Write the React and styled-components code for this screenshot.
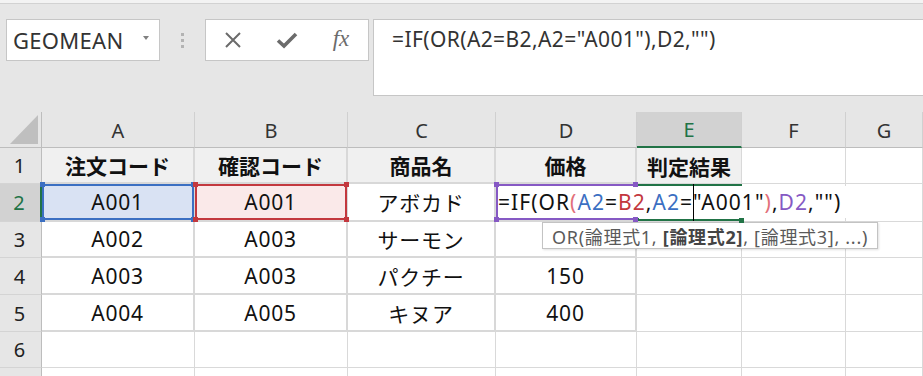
import React from 'react';
import styled, { createGlobalStyle } from 'styled-components';

const GlobalStyle = createGlobalStyle`
  html, body { margin: 0; padding: 0; background: #e6e6e6; overflow: hidden; }
  body { font-family: "Noto Sans", "Noto Sans CJK JP", sans-serif; }
`;

const GREEN = '#217346';
const BLUE = '#3b6fc2';
const RED = '#c3383e';
const PURPLE = '#8659c4';
const PAREN = '#e2707a';

const Page = styled.div`
  width: 923px;
  height: 376px;
  overflow: hidden;
  display: flex;
  flex-direction: column;
  background: #e6e6e6;
`;

const TopStrip = styled.div`
  height: 3px;
  flex: none;
  background: #f3f3f3;
  border-bottom: 1px solid #d2d2d2;
`;

const FormulaBar = styled.div`
  height: 108px;
  flex: none;
  box-sizing: border-box;
  display: flex;
  align-items: flex-start;
  padding: 15px 0 0 6px;
`;

const NameBox = styled.div`
  width: 154px;
  height: 42px;
  box-sizing: border-box;
  background: #fff;
  border: 1px solid #c6c6c6;
  display: flex;
  align-items: center;
  justify-content: space-between;
  padding: 0 10px 0 6px;
  font-size: 22px;
  letter-spacing: 0.3px;
  color: #333;
`;

const DropArrow = styled.span`
  width: 0;
  height: 0;
  border-left: 3.5px solid transparent;
  border-right: 3.5px solid transparent;
  border-top: 4px solid #808080;
  margin-top: -4px;
`;

const Grip = styled.div`
  width: 45px;
  height: 42px;
  display: flex;
  flex-direction: column;
  align-items: center;
  justify-content: center;
  gap: 3px;
  span {
    width: 3px;
    height: 3px;
    background: #b3b3b3;
  }
`;

const FxBox = styled.div`
  width: 164px;
  height: 42px;
  box-sizing: border-box;
  background: #fff;
  border: 1px solid #c6c6c6;
  display: grid;
  grid-template-columns: repeat(3, 54px);
  align-items: center;
  justify-items: center;
  color: #6b6b6b;
`;

const FxText = styled.span`
  font-family: "Liberation Serif", "DejaVu Serif", serif;
  font-style: italic;
  font-size: 23px;
  color: #6b6b6b;
  margin-top: -3px;
`;

const FormulaBox = styled.div`
  flex: 1;
  height: 77px;
  box-sizing: border-box;
  margin: 0 -2px 0 4px;
  background: #fff;
  border: 1px solid #c6c6c6;
  padding: 5px 0 0 18px;
  font-size: 21px;
  letter-spacing: 0.4px;
  line-height: 28px;
  color: #333;
  white-space: nowrap;
`;

const Sheet = styled.div`
  display: grid;
  grid-template-columns: 42px 153px 153px 148px 141px 105px 104px 77px;
  grid-template-rows: 36px 36px 38px 36px 37px 37px 36px 36px;
  background: #fff;
`;

const Corner = styled.div`
  background: #e6e6e6;
  border-right: 1px solid #bdbdbd;
  border-bottom: 1px solid #bdbdbd;
  display: flex;
  align-items: flex-end;
  justify-content: flex-end;
  padding: 0 3px 3px 0;
  box-sizing: border-box;
`;

const Triangle = styled.span`
  width: 0;
  height: 0;
  border-left: 28px solid transparent;
  border-bottom: 29px solid #bfbfbf;
`;

const ColHead = styled.div`
  box-sizing: border-box;
  background: ${p => (p.$active ? '#d2d2d2' : '#e6e6e6')};
  color: ${p => (p.$active ? GREEN : '#333')};
  border-right: 1px solid #d0d0d0;
  border-bottom: ${p => (p.$active ? `2px solid ${GREEN}` : '1px solid #bdbdbd')};
  display: flex;
  align-items: center;
  justify-content: center;
  font-size: 20px;
  padding-top: 1px;
`;

const RowHead = styled.div`
  box-sizing: border-box;
  background: ${p => (p.$active ? '#d2d2d2' : '#e6e6e6')};
  color: ${p => (p.$active ? GREEN : '#222')};
  border-right: ${p => (p.$active ? `2px solid ${GREEN}` : '1px solid #bdbdbd')};
  border-bottom: 1px solid #d4d4d4;
  display: flex;
  align-items: center;
  justify-content: center;
  font-size: 20px;
  padding-right: 2px;
`;

const Cell = styled.div`
  position: relative;
  box-sizing: border-box;
  background: ${p => p.$fill || '#fff'};
  border-right: ${p => (p.$table ? '2px solid #d8d8d8' : '1px solid #d9d9d9')};
  border-bottom: ${p => (p.$table ? '2px solid #d8d8d8' : '1px solid #d9d9d9')};
  display: flex;
  align-items: center;
  justify-content: center;
  font-size: 21px;
  letter-spacing: ${p => (p.$bold ? '0' : '0.8px')};
  font-weight: ${p => (p.$bold ? 700 : 400)};
  color: #111;
  white-space: nowrap;
`;

const RefBox = styled.div`
  position: absolute;
  top: 0;
  left: 0;
  right: -1px;
  bottom: 0;
  border: 2px solid ${p => p.$color};
  pointer-events: none;
`;

const Handle = styled.span`
  position: absolute;
  z-index: 2;
  width: 5px;
  height: 5px;
  background: ${p => p.$color};
  ${p => (p.$pos[0] === 't' ? 'top: -4px;' : 'bottom: -4px;')}
  ${p => (p.$pos[1] === 'l' ? 'left: -4px;' : 'right: -4px;')}
`;

const Editor = styled.div`
  position: absolute;
  z-index: 1;
  top: 2px;
  bottom: 2px;
  left: 2px;
  display: flex;
  align-items: center;
  padding-right: 10px;
  background: #fff;
  font-size: 21px;
  letter-spacing: 1.05px;
  color: #111;
  white-space: nowrap;
`;

const Tok = styled.span`
  color: ${p => p.$c || 'inherit'};
`;

const Caret = styled.span`
  display: inline-block;
  width: 1px;
  height: 37px;
  background: #000;
  margin-right: -1px;
`;

const Tooltip = styled.div`
  position: absolute;
  top: calc(100% + 4px);
  left: 44px;
  height: 27px;
  box-sizing: border-box;
  display: flex;
  align-items: center;
  padding: 0 9px;
  background: #fff;
  border: 1px solid #c3c3c3;
  box-shadow: 1px 1px 2px rgba(0, 0, 0, 0.12);
  font-size: 18px;
  letter-spacing: 0.7px;
  color: #5a5a5a;
  b { font-weight: 700; color: #444; }
`;

const cols = ['A', 'B', 'C', 'D', 'E', 'F', 'G'];

const rows = [
  ['注文コード', '確認コード', '商品名', '価格', '判定結果', '', ''],
  ['A001', 'A001', 'アボカド', '', '', '', ''],
  ['A002', 'A003', 'サーモン', '', '', '', ''],
  ['A003', 'A003', 'パクチー', '150', '', '', ''],
  ['A004', 'A005', 'キヌア', '400', '', '', ''],
  ['', '', '', '', '', '', ''],
  ['', '', '', '', '', '', ''],
];

const refs = {
  '1-0': { color: BLUE, fill: '#d9e2f3', handles: ['tl', 'tr', 'bl', 'br'] },
  '1-1': { color: RED, fill: '#fae9e9', handles: ['tl', 'tr', 'bl', 'br'] },
  '1-3': { color: PURPLE, handles: ['tl', 'tr', 'bl', 'br'] },
  '1-4': { color: GREEN, handles: ['br'] },
};

function Icons() {
  return (
    <>
      <svg width="18" height="18" viewBox="0 0 18 18">
        <path d="M2 2 L16 16 M16 2 L2 16" stroke="#6b6b6b" strokeWidth="2" fill="none" />
      </svg>
      <svg width="22" height="18" viewBox="0 0 22 18">
        <path d="M2 9.5 L8 15 L20 3" stroke="#6b6b6b" strokeWidth="3.6" fill="none" />
      </svg>
      <FxText>fx</FxText>
    </>
  );
}

function InCellEditor() {
  return (
    <Editor>
      <Tok>=IF(OR</Tok>
      <Tok $c={PAREN}>(</Tok>
      <Tok $c={BLUE}>A2</Tok>
      <Tok>=</Tok>
      <Tok $c={RED}>B2</Tok>
      <Tok>,</Tok>
      <Tok $c={BLUE}>A2</Tok>
      <Tok>=</Tok>
      <Caret />
      <Tok>"A001"</Tok>
      <Tok $c={PAREN}>)</Tok>
      <Tok>,</Tok>
      <Tok $c={PURPLE}>D2</Tok>
      <Tok>,"")</Tok>
      <Tooltip>
        OR(論理式1,&nbsp;<b>[論理式2]</b>, [論理式3], ...)
      </Tooltip>
    </Editor>
  );
}

export default function App() {
  return (
    <Page>
      <GlobalStyle />
      <TopStrip />
      <FormulaBar>
        <NameBox>
          GEOMEAN
          <DropArrow />
        </NameBox>
        <Grip>
          <span />
          <span />
          <span />
        </Grip>
        <FxBox>
          <Icons />
        </FxBox>
        <FormulaBox>=IF(OR(A2=B2,A2="A001"),D2,"")</FormulaBox>
      </FormulaBar>
      <Sheet>
        <Corner>
          <Triangle />
        </Corner>
        {cols.map(c => (
          <ColHead key={c} $active={c === 'E'}>{c}</ColHead>
        ))}
        {rows.map((row, r) => (
          <React.Fragment key={r}>
            <RowHead $active={r === 1}>{r + 1}</RowHead>
            {row.map((v, c) => {
              const ref = refs[`${r}-${c}`];
              const head = r === 0 && c < 5;
              return (
                <Cell
                  key={c}
                  $table={r < 5 && c < 4}
                  $bold={r === 0}
                  $fill={head ? '#f0f0f0' : ref && ref.fill}
                >
                  {v}
                  {ref && (
                    <RefBox $color={ref.color}>
                      {ref.handles.map(h => (
                        <Handle key={h} $pos={h} $color={ref.color} />
                      ))}
                    </RefBox>
                  )}
                  {r === 1 && c === 3 && <InCellEditor />}
                </Cell>
              );
            })}
          </React.Fragment>
        ))}
      </Sheet>
    </Page>
  );
}
